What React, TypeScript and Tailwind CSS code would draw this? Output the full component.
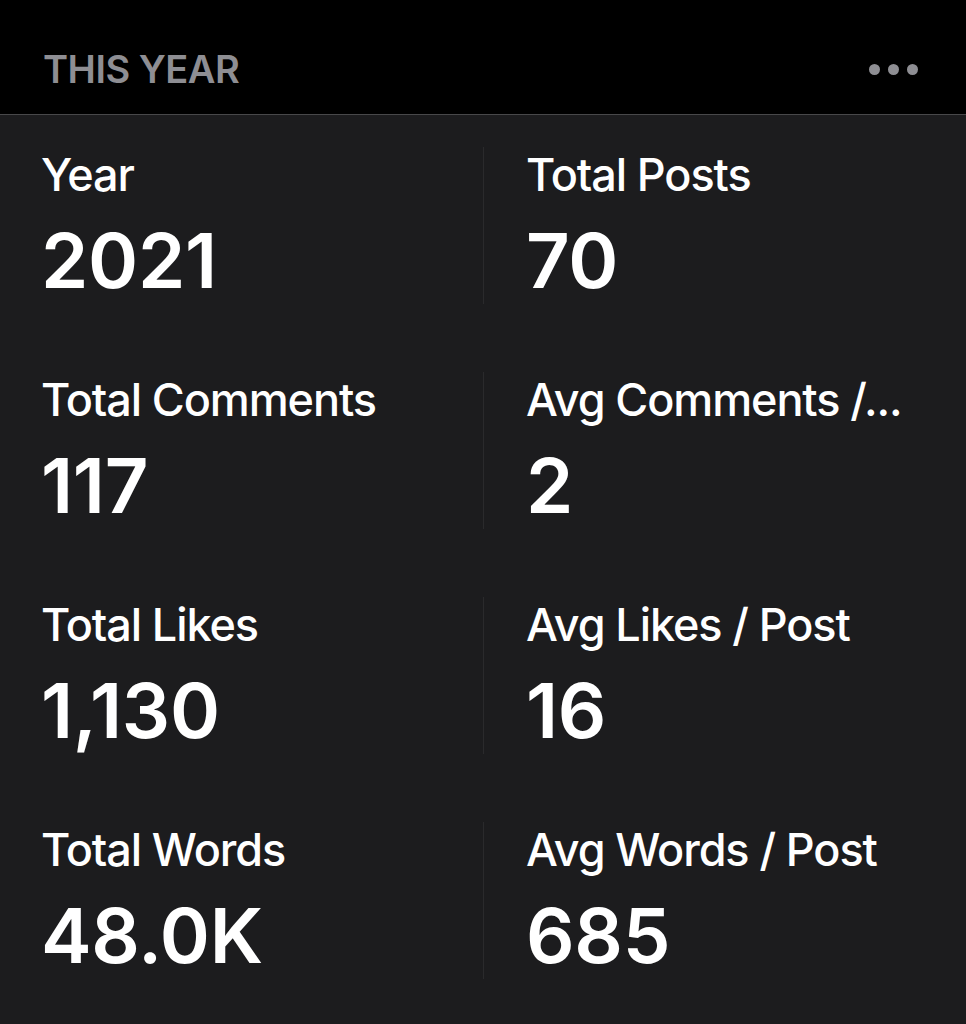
import React from "react";

// One stat cell: label on top, big value below
interface Stat {
  label: string;
  value: string;
}

const stats: Stat[] = [
  { label: "Year", value: "2021" },
  { label: "Total Posts", value: "70" },
  { label: "Total Comments", value: "117" },
  { label: "Avg Comments /...", value: "2" },
  { label: "Total Likes", value: "1,130" },
  { label: "Avg Likes / Post", value: "16" },
  { label: "Total Words", value: "48.0K" },
  { label: "Avg Words / Post", value: "685" },
];

const StatCell = ({ stat, right }: { stat: Stat; right: boolean }) => (
  <div
    className={
      right
        ? "h-[157px] border-l border-[#2a2a2c] pl-[42px] min-w-0"
        : "h-[157px] pl-[41px] min-w-0"
    }
  >
    <div className="text-[45px] leading-[55px] font-medium text-white tracking-[-1.1px] whitespace-nowrap">
      {stat.label}
    </div>
    <div className="mt-[20px] text-[76px] leading-[76px] font-semibold text-white tracking-[-0.3px]">
      {stat.value}
    </div>
  </div>
);

export default function App() {
  return (
    <div
      className="w-[966px] h-[1024px] bg-[#1c1c1e] overflow-hidden"
      style={{ fontFamily: "Inter, 'Noto Sans', sans-serif" }}
    >
      {/* Header */}
      <div className="h-[115px] bg-black flex items-center justify-between pl-[43px] pr-[48px] border-b border-[#48484a]">
        <span className="text-[38px] font-semibold text-[#8e8e93] tracking-[-0.5px] mt-[24px]">
          THIS YEAR
        </span>
        <div className="flex gap-[8px] mt-[24px]">
          <span className="w-[11px] h-[11px] rounded-full bg-[#8e8e93]" />
          <span className="w-[11px] h-[11px] rounded-full bg-[#8e8e93]" />
          <span className="w-[11px] h-[11px] rounded-full bg-[#8e8e93]" />
        </div>
      </div>

      {/* Stats grid */}
      <div className="grid grid-cols-[483px_483px] gap-y-[68px] pt-[32px]">
        {stats.map((s, i) => (
          <StatCell key={s.label} stat={s} right={i % 2 === 1} />
        ))}
      </div>
    </div>
  );
}
